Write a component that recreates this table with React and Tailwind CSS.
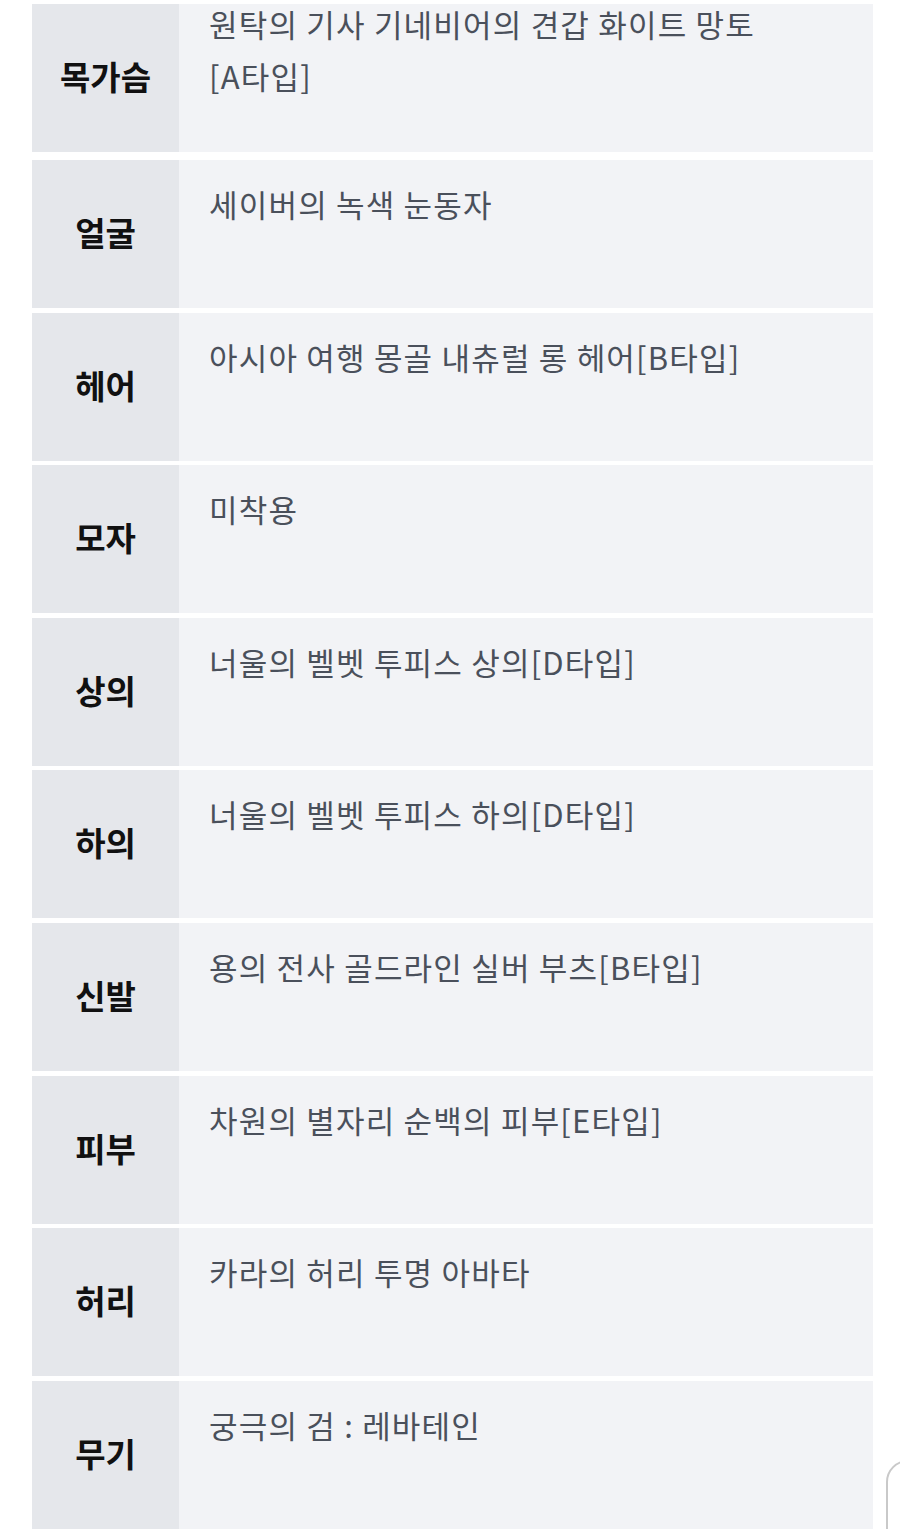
const ROWS = [
  { label: '목가슴', value: ['원탁의 기사 기네비어의 견갑 화이트 망토', '[A타입]'] },
  { label: '얼굴', value: ['세이버의 녹색 눈동자'] },
  { label: '헤어', value: ['아시아 여행 몽골 내츄럴 롱 헤어[B타입]'] },
  { label: '모자', value: ['미착용'] },
  { label: '상의', value: ['너울의 벨벳 투피스 상의[D타입]'] },
  { label: '하의', value: ['너울의 벨벳 투피스 하의[D타입]'] },
  { label: '신발', value: ['용의 전사 골드라인 실버 부츠[B타입]'] },
  { label: '피부', value: ['차원의 별자리 순백의 피부[E타입]'] },
  { label: '허리', value: ['카라의 허리 투명 아바타'] },
  { label: '무기', value: ['궁극의 검 : 레바테인'] },
]

export default function App() {
  return (
    <div
      className="relative w-[900px] h-[1529px] overflow-hidden bg-white pt-[4px] pl-[32px]"
      style={{ fontFamily: '"Noto Sans CJK KR", "Noto Sans", sans-serif' }}
    >
      {/* Avatar item table */}
      <div className="flex flex-col gap-[4.6px] w-[841px]">
        {ROWS.map((r, i) => (
          <div key={r.label} className={`flex h-[148px] ${i === 0 ? 'mb-[3.5px]' : ''}`}>
            <div className="w-[147px] shrink-0 bg-[#e5e7eb] flex items-center justify-center">
              <span className="text-[33px] font-bold text-[#111111] leading-none -mt-[3px]">{r.label}</span>
            </div>
            <div className={`flex-1 bg-[#f2f3f6] pl-[30px] ${i === 0 ? 'pt-[0px]' : 'pt-[18px]'}`}>
              <p className={`text-[31px] leading-[52px] text-[#4a505b] tracking-[1.2px] ${i === 0 ? '-mt-[6px]' : ''}`}>
                {r.value.map((line, j) => (
                  <span key={j} className="block whitespace-nowrap">{line}</span>
                ))}
              </p>
            </div>
          </div>
        ))}
      </div>

      {/* floating button edge, bottom right */}
      <div className="absolute left-[886px] top-[1460px] w-[60px] h-[110px] rounded-[22px] border-2 border-[#c9c9c9] bg-white" />
    </div>
  )
}
